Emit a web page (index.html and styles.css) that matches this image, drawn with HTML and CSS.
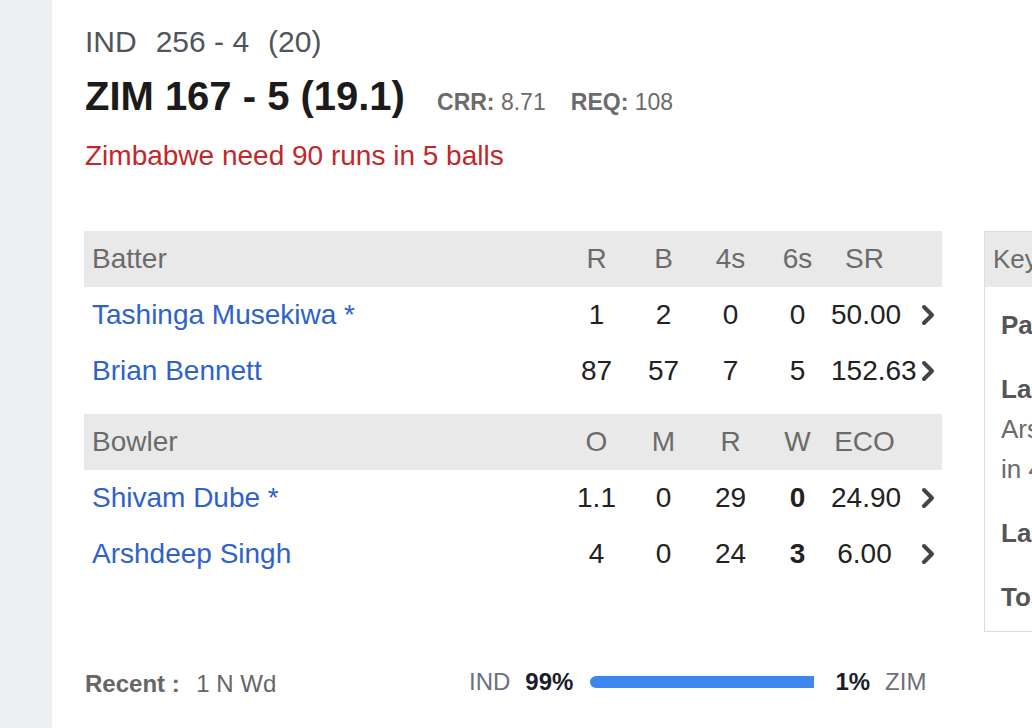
FILE: index.html
```html
<!DOCTYPE html>
<html>
<head>
    <meta charset="UTF-8">
    <title>IND vs ZIM - Live Score</title>
    <link rel="stylesheet" href="styles.css">
</head>
<body>
    <div class="side"></div>

    <div class="main">
        <div class="score score-done">
            <span class="team">IND</span><span class="runs">256 - 4</span><span>(20)</span>
        </div>
        <div class="score score-live">
            <span class="team">ZIM</span><span class="runs">167 - 5</span><span>(19.1)</span>
            <span class="rate"><b>CRR:</b> 8.71</span>
            <span class="rate"><b>REQ:</b> 108</span>
        </div>
        <div class="status">Zimbabwe need 90 runs in 5 balls</div>

        <div class="match-row">
            <div class="left-col">
                <div class="stat-table">
                    <div class="row head">
                        <div class="name">Batter</div>
                        <div>R</div><div>B</div><div>4s</div><div>6s</div><div>SR</div><div></div>
                    </div>
                    <div class="row">
                        <div class="name"><a href="#">Tashinga Musekiwa *</a></div>
                        <div>1</div><div>2</div><div>0</div><div>0</div><div>50.00</div>
                        <div class="more"><svg width="16" height="22" viewBox="0 0 16 22"><polyline points="4,3 12,11 4,19" /></svg></div>
                    </div>
                    <div class="row">
                        <div class="name"><a href="#">Brian Bennett</a></div>
                        <div>87</div><div>57</div><div>7</div><div>5</div><div>152.63</div>
                        <div class="more"><svg width="16" height="22" viewBox="0 0 16 22"><polyline points="4,3 12,11 4,19" /></svg></div>
                    </div>
                </div>

                <div class="stat-table">
                    <div class="row head">
                        <div class="name">Bowler</div>
                        <div>O</div><div>M</div><div>R</div><div>W</div><div>ECO</div><div></div>
                    </div>
                    <div class="row">
                        <div class="name"><a href="#">Shivam Dube *</a></div>
                        <div>1.1</div><div>0</div><div>29</div><div class="wkts">0</div><div>24.90</div>
                        <div class="more"><svg width="16" height="22" viewBox="0 0 16 22"><polyline points="4,3 12,11 4,19" /></svg></div>
                    </div>
                    <div class="row">
                        <div class="name"><a href="#">Arshdeep Singh</a></div>
                        <div>4</div><div>0</div><div>24</div><div class="wkts">3</div><div>6.00</div>
                        <div class="more"><svg width="16" height="22" viewBox="0 0 16 22"><polyline points="4,3 12,11 4,19" /></svg></div>
                    </div>
                </div>

                <div class="bottom-row">
                    <div class="recent"><b>Recent :</b> 1 N Wd</div>
                    <div class="win-prob">
                        <span class="wp-team">IND</span>
                        <b>99%</b>
                        <div class="wp-bar"><div class="wp-fill" style="width: 99%;"></div></div>
                        <b>1%</b>
                        <span class="wp-team">ZIM</span>
                    </div>
                </div>
            </div>

            <div class="key-panel">
                <div class="key-head">Key Stats</div>
                <div class="key-body">
                    <div class="key-item"><b>Partnership:</b> 8(3)</div>
                    <div class="key-item">
                        <b>Last Wkt:</b><br>
                        Arshdeep Singh 3-24<br>
                        in 4 overs
                    </div>
                    <div class="key-item"><b>Last 5 overs:</b> 61 runs, 1 wkt</div>
                    <div class="key-item"><b>Toss:</b> India</div>
                </div>
            </div>
        </div>
    </div>
</body>
</html>
```

FILE: styles.css
```css
html, body {
    height: 100%;
    overflow: hidden;
}
body {
    margin: 0;
    display: flex;
    font-family: "Liberation Sans", Arial, sans-serif;
    background: #fff;
    color: #222;
}
.side {
    width: 52px;
    flex-shrink: 0;
    background: #ecf0f1;
}
.main {
    flex: 1;
    min-width: 0;
    padding: 24px 0 0 32px;
    overflow: hidden;
}
.score {
    padding-left: 1px;
    white-space: nowrap;
}
.score-done {
    font-size: 30px;
    line-height: 36px;
    color: #50555c;
}
.score-done .team,
.score-done .runs {
    margin-right: 19px;
}
.score-live {
    margin-top: 13px;
    font-size: 40px;
    line-height: 46px;
    font-weight: bold;
    color: #1b1b1b;
}
.score-live .team,
.score-live .runs {
    margin-right: 11px;
}
.rate {
    font-size: 23px;
    font-weight: normal;
    color: #6b6b6b;
    margin-left: 21px;
}
.rate + .rate {
    margin-left: 14px;
}
.status {
    margin-top: 14px;
    padding-left: 1px;
    font-size: 28px;
    line-height: 34px;
    color: #c1272d;
}
.match-row {
    display: flex;
    align-items: flex-start;
    gap: 42px;
    margin-top: 58px;
}
.left-col {
    width: 858px;
    flex-shrink: 0;
}
.stat-table + .stat-table {
    margin-top: 15px;
}
.row {
    display: grid;
    grid-template-columns: 479px repeat(5, 67px) 44px;
    align-items: center;
    height: 56px;
    font-size: 28px;
    text-align: center;
}
.row.head {
    background: #e9e9e9;
    color: #6b6b6b;
}
.row .name {
    text-align: left;
    padding-left: 8px;
}
.row a {
    color: #2e62cb;
    text-decoration: none;
}
.wkts {
    font-weight: bold;
}
.more {
    display: flex;
    justify-content: flex-end;
    padding-right: 6px;
}
.more polyline {
    fill: none;
    stroke: #444;
    stroke-width: 4;
    stroke-linecap: round;
    stroke-linejoin: round;
}
.bottom-row {
    display: flex;
    align-items: center;
    margin-top: 85px;
    height: 30px;
    font-size: 24px;
}
.recent {
    width: 384px;
    padding: 4px 0 0 1px;
    color: #666;
}
.recent b {
    margin-right: 10px;
}
.win-prob {
    display: flex;
    align-items: center;
    color: #1b1d2a;
}
.wp-team {
    color: #6c707a;
}
.win-prob b {
    margin: 0 17px 0 15px;
}
.win-prob b:last-of-type {
    margin: 0 15px 0 19px;
}
.wp-bar {
    width: 226px;
    height: 12px;
}
.wp-fill {
    height: 100%;
    background: #3b87ef;
    border-radius: 6px 0 0 6px;
}
.key-panel {
    width: 320px;
    flex-shrink: 0;
    height: 401px;
    border: 1px solid #dcdcdc;
    box-sizing: border-box;
    white-space: nowrap;
}
.key-head {
    height: 55px;
    line-height: 55px;
    padding-left: 8px;
    background: #e9e9e9;
    font-size: 26px;
    color: #6b6b6b;
}
.key-body {
    padding: 18px 16px 15px;
    font-size: 26px;
    line-height: 40px;
    color: #6b6b6b;
}
.key-item + .key-item {
    margin-top: 24px;
}
.key-item b {
    color: #555;
}
```
